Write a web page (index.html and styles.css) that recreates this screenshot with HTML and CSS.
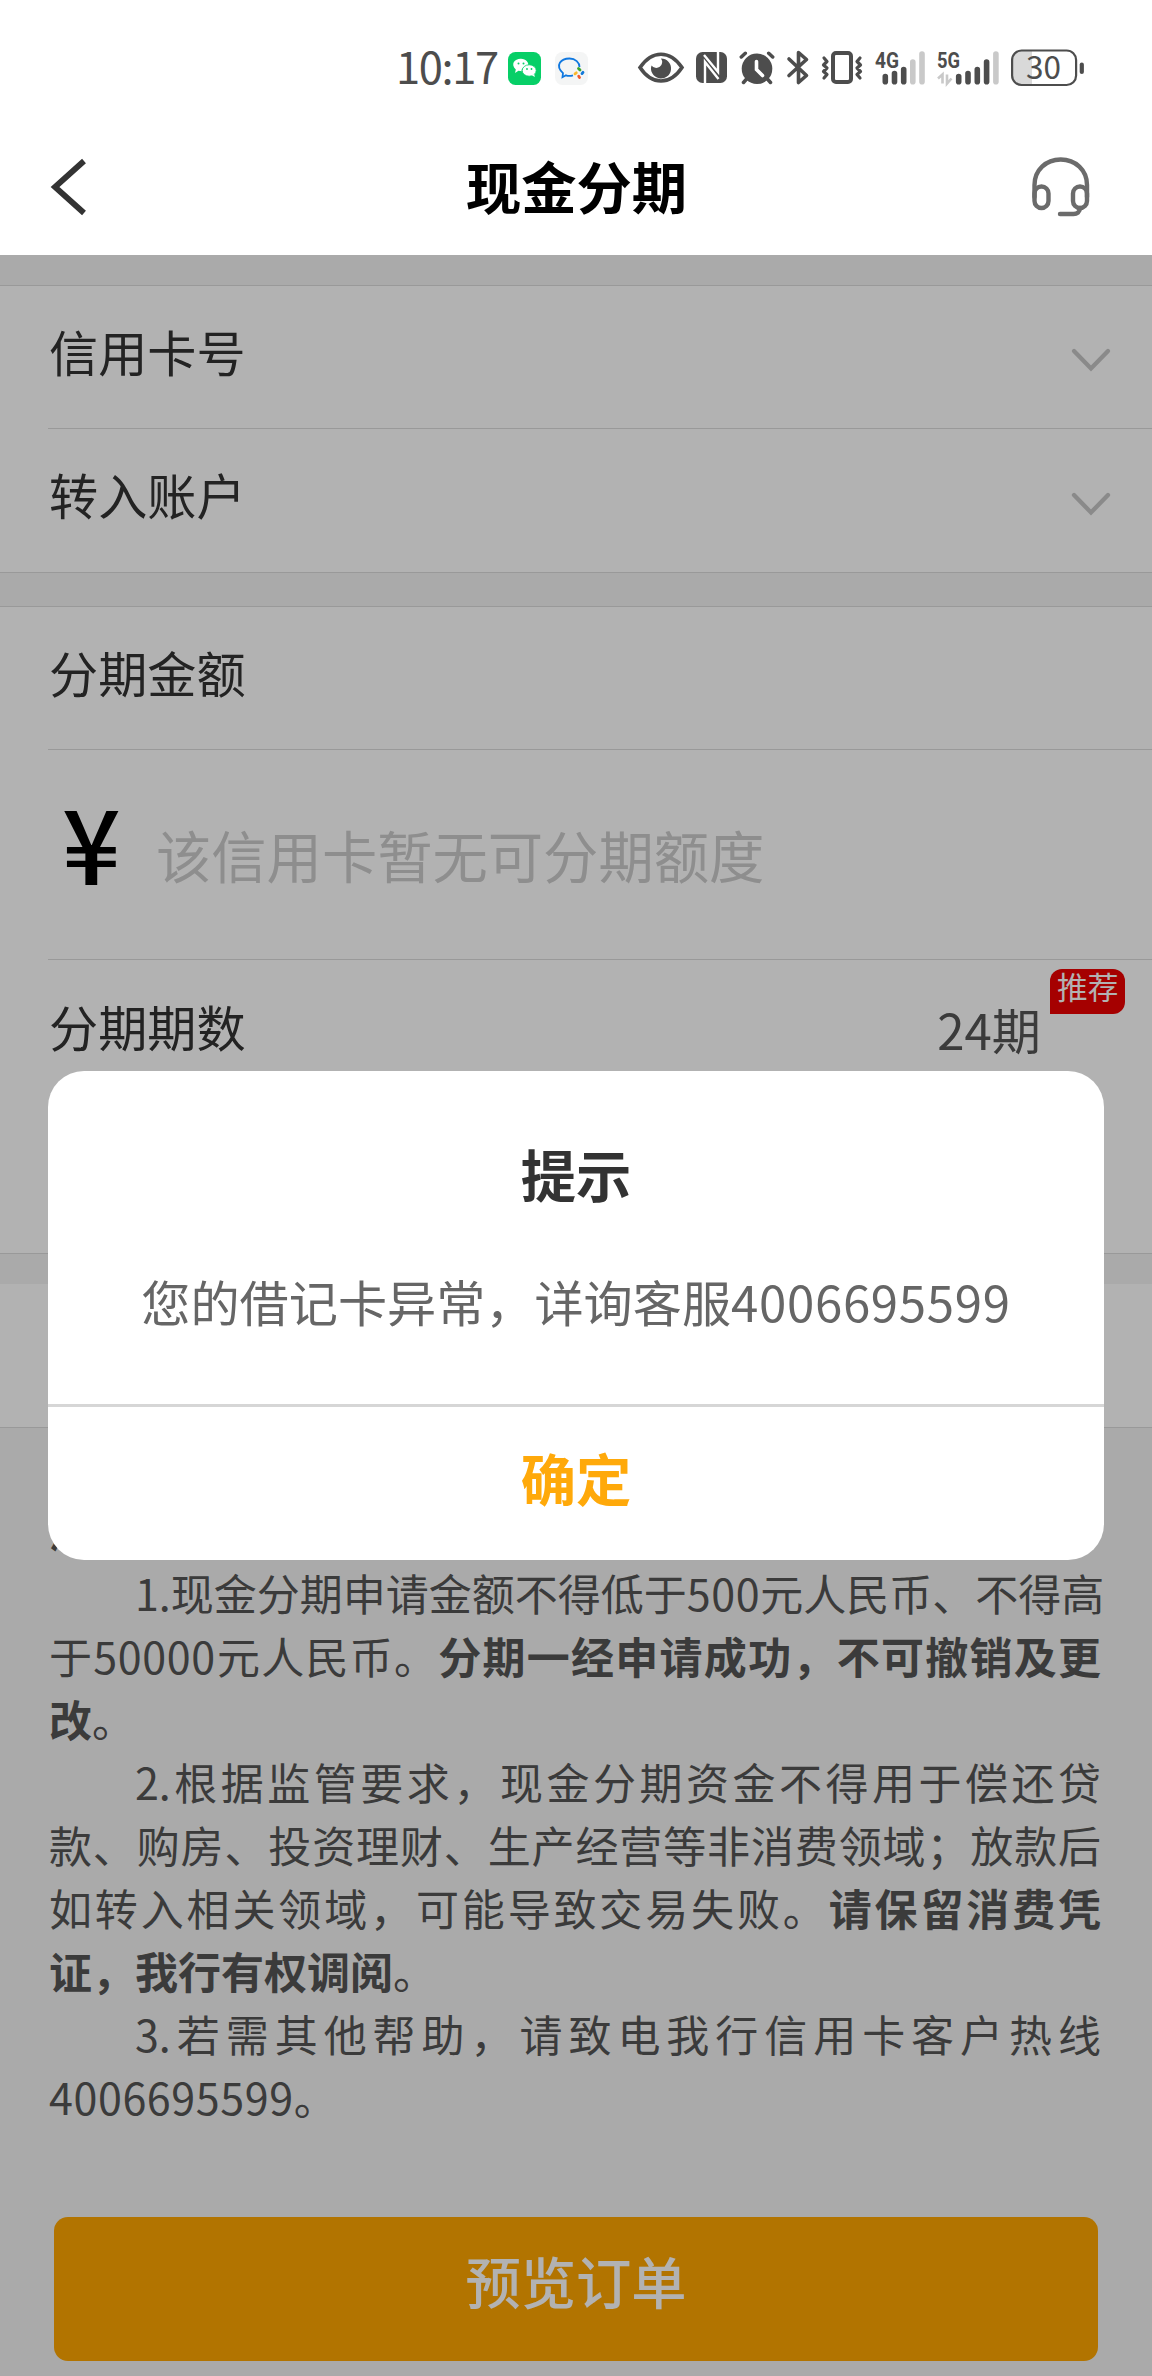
FILE: index.html
```html
<!DOCTYPE html>
<html lang="zh-CN">
<head>
<meta charset="utf-8">
<title>现金分期</title>
<link rel="stylesheet" href="styles.css">
</head>
<body>
<div class="status-bar">
  <span class="time">10:17</span>
  <svg class="i-wechat" width="33" height="36" viewBox="0 0 33 36">
    <rect y="2" width="33" height="33" rx="7.500" fill="#07cf67"/>
    <path d="M7 23 7.800 19.500C2 14 7 8.500 13 8.800 18 9 21.500 13 20 16.500 14 16.500 13 20 14 21.300l-3.600-.5z" fill="#fff"/>
    <ellipse cx="21.200" cy="20.500" rx="7" ry="5.700" fill="#fff" stroke="#07cf67" stroke-width=".8"/>
    <path d="m23.500 25 3.300 2-.6-3z" fill="#fff"/>
    <g fill="#07cf67"><circle cx="10.500" cy="13.400" r="1"/><circle cx="15.500" cy="13.400" r="1"/><circle cx="19" cy="19" r=".9"/><circle cx="23.500" cy="19" r=".9"/></g>
  </svg>
  <svg class="i-wecom" width="33" height="36" viewBox="0 0 33 36">
    <rect y="2" width="33" height="33" rx="7.500" fill="#f4f5f5"/>
    <path d="M18 25.300c-2.500.8-5 .8-7 0l-3.500 1.900.5-4C-.5 15 6 8.500 14.500 8.500c6 0 10 4 10 8.500" fill="none" stroke="#1078e0" stroke-width="1.800"/>
    <g stroke-width="2.800" stroke-linecap="round"><path d="m23.500 18.500 1.500 1.500" stroke="#3ca530"/><path d="m28 22.300-1 1.300" stroke="#1278d8"/><path d="m24.500 27.500-.8-1.300" stroke="#f0582c"/><path d="m20 23.800 1.300-1" stroke="#fab92c"/></g>
  </svg>
  <svg class="i-eye" width="46" height="36" viewBox="0 0 46 36">
    <path d="M2 17.500Q11 4.200 23 4.200T44 17.500Q35 31 23 31T2 17.500z" fill="none" stroke="#4d4d4d" stroke-width="3.600"/>
    <path d="M23 8.500a10 10 0 1 1-9.500 7A5.700 5.700 0 1 0 23 8.500z" fill="#4d4d4d"/>
  </svg>
  <svg class="i-nfc" width="31" height="36" viewBox="0 0 31 36">
    <rect y="2" width="31" height="31" rx="6.500" fill="#4d4d4d"/>
    <path d="M9 33.500V12L22.500 29M22 1.500V22L8 5" fill="none" stroke="#fff" stroke-width="2.400"/>
  </svg>
  <svg class="i-alarm" width="36" height="36" viewBox="0 0 36 36">
    <g stroke="#4d4d4d" stroke-width="3.500" stroke-linecap="round"><path d="m2.300 7 4-3.700M33.700 7l-4-3.700M8 28.500l-3.500 4M28 28.500l3.500 4"/></g>
    <circle cx="18" cy="18.800" r="15.300" fill="#4d4d4d"/>
    <path d="M17.500 11.500v8l6 6" fill="none" stroke="#fff" stroke-width="3.600" stroke-linecap="round"/>
  </svg>
  <svg class="i-bt" width="23" height="36" viewBox="0 0 23 36">
    <path d="m2 9 17.500 16.500-8 7V2.500l8 7L2 25.500" fill="none" stroke="#4d4d4d" stroke-width="3.600" stroke-linecap="round" stroke-linejoin="round"/>
  </svg>
  <svg class="i-vib" width="42" height="36" viewBox="0 0 42 36">
    <rect x="12" y="3" width="18" height="29" rx="3" fill="none" stroke="#4d4d4d" stroke-width="4"/>
    <path d="m3 8 3 3.500L2.500 15 6 18l-3.500 3.500L6 24.500 3 28M39 8l-3 3.500 3.500 3.500L36 18l3.500 3.500-3.500 3L39 28" fill="none" stroke="#4d4d4d" stroke-width="3.200" stroke-linecap="round" stroke-linejoin="round"/>
  </svg>
  <svg class="i-4g" width="50" height="36" viewBox="0 0 50 36">
    <text class="net" x="0" y="17.500" textLength="24" lengthAdjust="spacingAndGlyphs">4G</text>
    <g stroke="#4d4d4d" stroke-width="5.600" stroke-linecap="round"><path d="M10.300 26.500v5.200M19.500 23.500v8.200M28.700 19.500v12.200"/></g>
    <g stroke="#c9c9c9" stroke-width="5.600" stroke-linecap="round"><path d="M37.800 12v19.700M47 4v27.700"/></g>
  </svg>
  <svg class="i-5g" width="62" height="36" viewBox="0 0 62 36">
    <text class="net" x="0" y="17.500" textLength="23" lengthAdjust="spacingAndGlyphs">5G</text>
    <path d="M5.500 33.500v-9l-4.500 4M10 24.500v9l4.500-5" fill="none" stroke="#c9c9c9" stroke-width="2.600"/>
    <g stroke="#4d4d4d" stroke-width="5.600" stroke-linecap="round"><path d="M21.700 26.500v5.200M31 23.500v8.200M40.300 19.500v12.200M49.600 12v19.700"/></g>
    <path d="M58.900 4v27.700" stroke="#c9c9c9" stroke-width="5.600" stroke-linecap="round"/>
  </svg>
  <svg class="i-bat" width="73" height="38" viewBox="0 0 73 38">
    <path d="M21 2v34H11q-9 0-9-9V11q0-9 9-9z" fill="#d9d9d9"/>
    <rect x="1.100" y="1.500" width="64" height="34.500" rx="9.500" fill="none" stroke="#4d4d4d" stroke-width="2.200"/>
    <path d="M70.800 15.500v7.500" stroke="#4d4d4d" stroke-width="4.200" stroke-linecap="round"/>
    <text class="pct" x="32.500" y="30" text-anchor="middle">30</text>
  </svg>
</div>
<header class="nav">
  <svg class="back" width="40" height="56" viewBox="0 0 40 56"><path d="M37 2 8 28l29 26" fill="none" stroke="#333" stroke-width="5.800"/></svg>
  <h1 class="nav-title">现金分期</h1>
  <svg class="service" width="58" height="60" viewBox="0 0 58 60">
    <g fill="none" stroke="#6b6b6b" stroke-width="4.400" stroke-linecap="round"><path d="M2.500 40V28C2.500 13 14 2.500 28.700 2.500S55 13 55 28v12"/><rect x="2.500" y="29.500" width="14" height="21.500" rx="7"/><rect x="41" y="29.500" width="14" height="21.500" rx="7"/><path d="M48 51c0 4-3 6-6.500 6H28"/></g>
  </svg>
</header>

<main class="page">
  <section class="card">
    <div class="row"><span>信用卡号</span><svg class="chev" width="40" height="24" viewBox="0 0 40 24"><path d="m3 3 17 17.500L37 3" fill="none" stroke="#c6c6c6" stroke-width="4.300" stroke-linecap="round"/></svg></div>
    <div class="row"><span>转入账户</span><svg class="chev" width="40" height="24" viewBox="0 0 40 24"><path d="m3 3 17 17.500L37 3" fill="none" stroke="#c6c6c6" stroke-width="4.300" stroke-linecap="round"/></svg></div>
  </section>
  <section class="card">
    <div class="row"><span>分期金额</span></div>
    <div class="row amount"><span class="yen">¥</span><span class="hint">该信用卡暂无可分期额度</span></div>
    <div class="row term"><span>分期期数</span><span class="term-value">24期<em class="tag">推荐</em></span></div>
  </section>
  <section class="card agree"></section>
  <section class="notes">
    <h2 class="notes-title">温馨提示：</h2>
    <p class="line indent">1.现金分期申请金额不得低于<span class="num">500</span>元人民币、不得高</p>
    <p class="line">于<span class="num">50000</span>元人民币。<b>分期一经申请成功，不可撤销及更</b></p>
    <p class="line last"><b>改</b>。</p>
    <p class="line indent">2.根据监管要求，现金分期资金不得用于偿还贷</p>
    <p class="line">款、购房、投资理财、生产经营等非消费领域；放款后</p>
    <p class="line">如转入相关领域，可能导致交易失败。<b>请保留消费凭</b></p>
    <p class="line last"><b>证，我行有权调阅</b>。</p>
    <p class="line indent">3.若需其他帮助，请致电我行信用卡客户热线</p>
    <p class="line last"><span class="num">4006695599</span>。</p>
  </section>
  <button class="submit">预览订单</button>
</main>

<div class="mask">
  <div class="dialog">
    <h2 class="dialog-title">提示</h2>
    <p class="dialog-text">您的借记卡异常，详询客服<span class="num">4006695599</span></p>
    <button class="dialog-ok">确定</button>
  </div>
</div>
</body>
</html>
```

FILE: styles.css
```css
* { box-sizing: border-box; margin: 0; padding: 0; }

body {
  width: 1152px;
  height: 2376px;
  overflow: hidden;
  background: #f4f4f4;
  color: #333;
  font-family: "Noto Sans CJK SC", sans-serif;
  font-size: 49.15px;
}

button { border: 0; font-family: inherit; }
svg { display: block; flex: none; overflow: visible; }
.num { letter-spacing: 0.014em; }

/* status bar */
.status-bar {
  display: flex;
  align-items: center;
  height: 136px;
  padding-left: 396px;
  background: #fff;
}
.time { width: 112px; font-size: 43.5px; line-height: 50px; padding-bottom: 4px; letter-spacing: -1.4px; color: #4d4d4d; white-space: nowrap; }
.i-wecom { margin-left: 14px; }
.i-eye { margin-left: 50px; }
.i-nfc { margin-left: 12px; }
.i-alarm { margin-left: 12px; }
.i-bt { margin-left: 12px; }
.i-vib { margin-left: 11px; }
.i-4g { margin-left: 12px; }
.i-5g { margin-left: 12px; }
.i-bat { margin-left: 12px; }
.net { font: bold 22px Roboto, sans-serif; fill: #4d4d4d; }
.pct { font: 31.500px "Noto Sans CJK SC", sans-serif; fill: #4d4d4d; }

/* navigation */
.nav {
  display: flex;
  align-items: center;
  justify-content: space-between;
  height: 119px;
  padding: 0 62px 17px 47px;
  background: #fff;
}
.nav-title { font-size: 55.3px; line-height: 80px; font-weight: 700; color: #000; padding: 0 0 5px 34px; }

/* form */
.page { padding-top: 30px; }
.card {
  background: #fff;
  border-top: 1px solid #dbdbdb;
  border-bottom: 1px solid #dbdbdb;
  margin-bottom: 33px;
}
.row {
  display: flex;
  align-items: center;
  justify-content: space-between;
  height: 143px;
  margin-left: 48px;
  padding: 0 41px 13px 1px;
  border-bottom: 1px solid #dbdbdb;
  line-height: 70px;
}
.row:last-child { border-bottom: 0; }
.chev { margin-top: 19px; }

.amount { height: 210px; justify-content: flex-start; }
.yen { width: 107px; padding: 0 0 15px 13px; font-size: 103px; line-height: 120px; font-weight: 500; color: #000; }
.hint { font-size: 55.3px; color: #ccc; padding-top: 11px; }

.term { height: 293px; align-items: flex-start; padding-top: 31px; padding-right: 111px; }
.term-value { position: relative; color: #555; padding-top: 3px; }
.tag {
  position: absolute;
  left: 113px;
  top: -22px;
  width: 75px;
  height: 45px;
  border-radius: 12px 12px 12px 0;
  background: #ed0000;
  color: #fff;
  font-size: 30.7px;
  font-style: normal;
  line-height: 33px;
  text-align: center;
}
.agree { height: 144px; margin-top: -3px; margin-bottom: 0; border-top: 0; }

/* notes */
.notes { padding: 70px 51px 0 49px; font-size: 43px; line-height: 63px; color: #555; }
.notes-title { font-size: 43px; }
.line { text-align-last: justify; white-space: nowrap; }
.line.last { text-align-last: left; }
.indent { padding-left: 86px; }

.submit {
  display: block;
  width: 1044px;
  height: 144px;
  margin: 89px auto 0;
  padding-bottom: 18px;
  border-radius: 14px;
  background: #ffa600;
  color: #fff;
  font-size: 55.3px;
  font-weight: 500;
}

/* dialog, laid over the page below the navigation */
.mask {
  position: absolute;
  top: 255px;
  left: 0;
  width: 1152px;
  height: 2121px;
  display: flex;
  align-items: center;
  justify-content: center;
  background: rgba(0, 0, 0, 0.3);
}
.dialog {
  display: flex;
  flex-direction: column;
  width: 1056px;
  height: 489px;
  border-radius: 36px;
  background: #fff;
  text-align: center;
}
.dialog-title { padding-top: 62px; font-size: 55.3px; line-height: 80px; font-weight: 700; }
.dialog-text { flex: 1; padding-top: 53px; line-height: 70px; color: #666; }
.dialog-ok {
  height: 156px;
  padding-bottom: 14px;
  border-top: 3px solid #d6d6d6;
  border-radius: 0;
  background: none;
  color: #ffa90a;
  font-size: 55.3px;
  font-weight: 700;
}
```
